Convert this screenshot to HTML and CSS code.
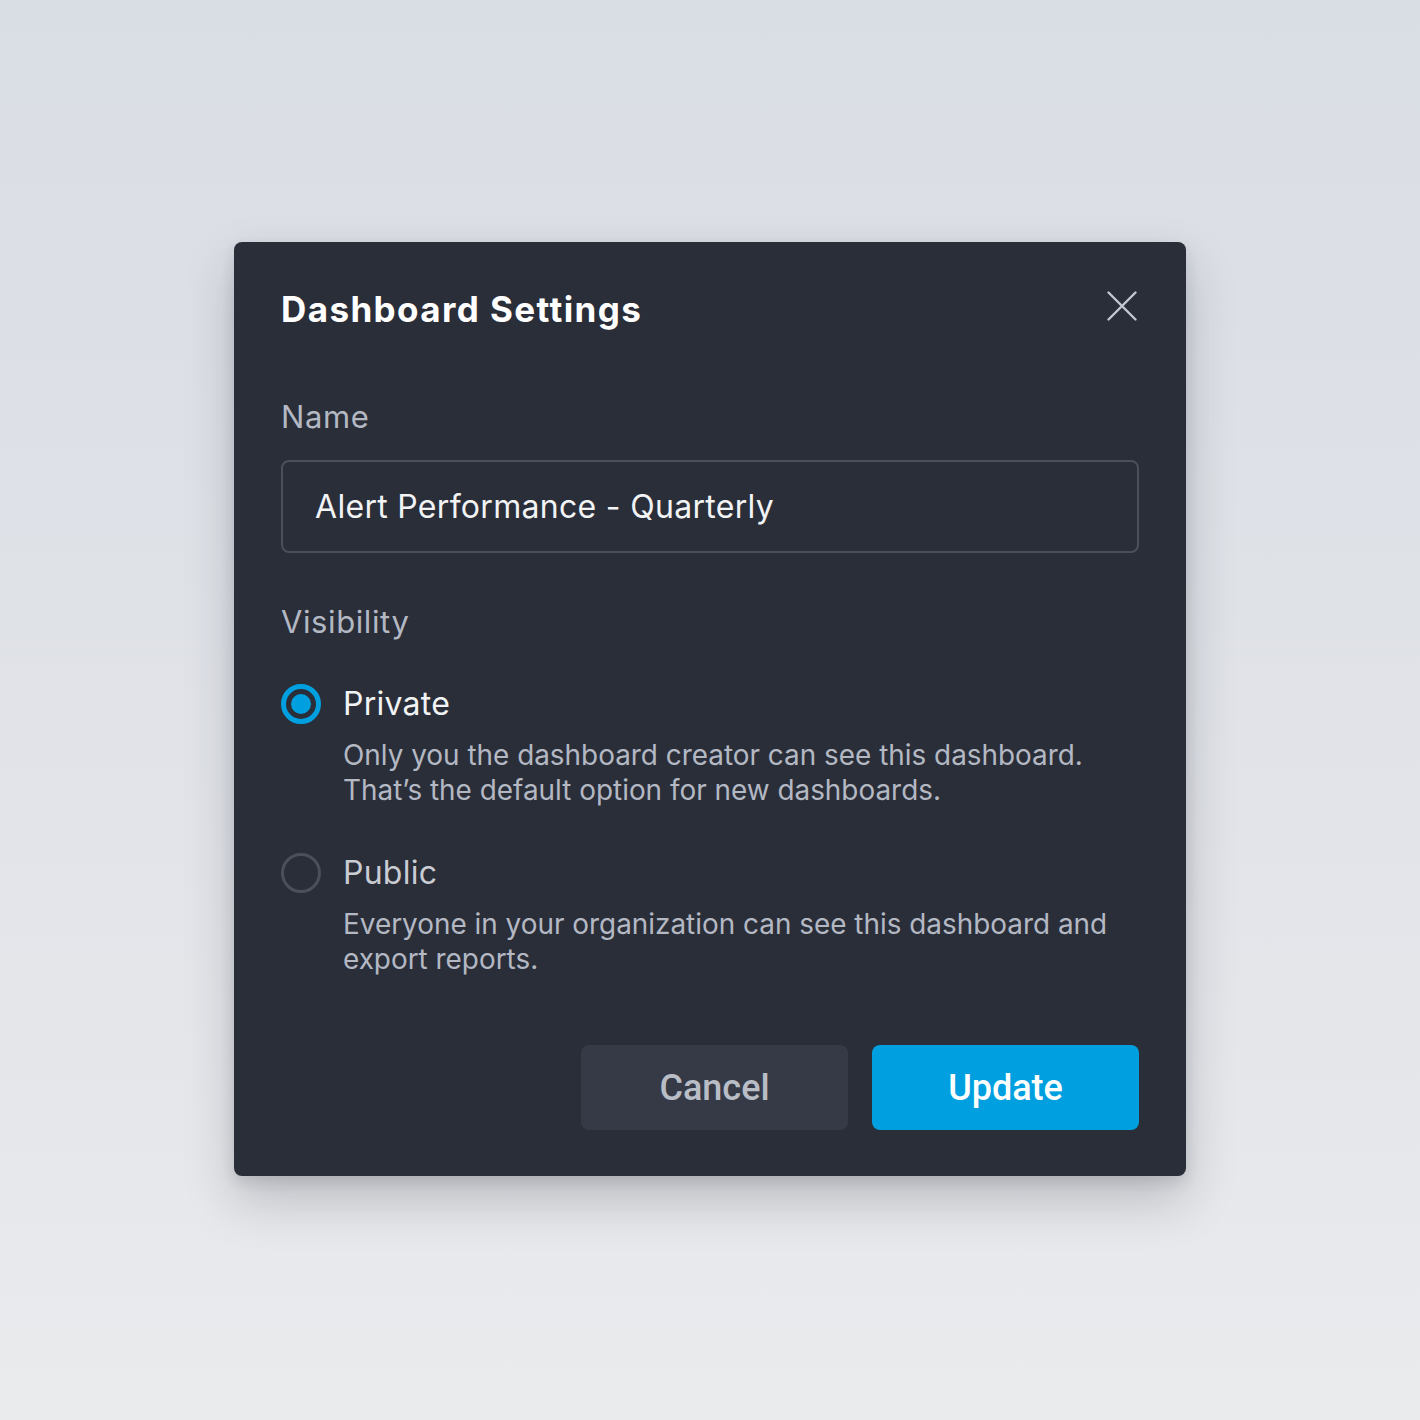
FILE: index.html
```html
<!DOCTYPE html>
<html lang="en">
<head>
<meta charset="utf-8">
<title>Dashboard Settings</title>
<link rel="stylesheet" href="styles.css">
</head>
<body>
<div class="stage">
  <div class="dialog" role="dialog" aria-labelledby="dlg-title">
    <div class="header">
      <h1 class="title" id="dlg-title">Dashboard Settings</h1>
      <button class="close" aria-label="Close">
        <svg width="34" height="34" viewBox="0 0 34 34" fill="none" stroke="#c3c7cf" stroke-width="2.4" stroke-linecap="round">
          <path d="M3.5 3.5 L30.5 30.5 M30.5 3.5 L3.5 30.5"/>
        </svg>
      </button>
    </div>
    <div class="label name-label">Name</div>
    <div class="input">Alert Performance - Quarterly</div>
    <div class="label vis-label">Visibility</div>
    <div class="option first">
      <span class="radio checked"></span>
      <div class="opt-body">
        <div class="opt-title">Private</div>
        <div class="opt-desc">Only you the dashboard creator can see this dashboard.<br>That’s the default option for new dashboards.</div>
      </div>
    </div>
    <div class="option second">
      <span class="radio"></span>
      <div class="opt-body">
        <div class="opt-title muted">Public</div>
        <div class="opt-desc">Everyone in your organization can see this dashboard and<br>export reports.</div>
      </div>
    </div>
    <div class="actions">
      <button class="btn cancel">Cancel</button>
      <button class="btn update">Update</button>
    </div>
  </div>
</div>
</body>
</html>
```
FILE: styles.css
```css
* { box-sizing: border-box; }
html, body { margin: 0; padding: 0; }
body {
  width: 1420px;
  height: 1420px;
  background: linear-gradient(180deg, #d9dde4 0%, #e2e4e9 60%, #eaebed 100%);
  font-family: Inter, "Noto Sans", sans-serif;
}
.stage {
  padding-top: 242px;
  padding-left: 234px;
}
.dialog {
  width: 952px;
  height: 934px;
  background: #2a2e39;
  border-radius: 8px;
  padding: 47px 47px 46px 47px;
  box-shadow: 0 24px 50px rgba(30, 36, 50, 0.22), 0 6px 14px rgba(30, 36, 50, 0.12);
  display: flex;
  flex-direction: column;
}
.header {
  display: flex;
  justify-content: space-between;
  align-items: center;
  height: 40px;
}
.title {
  margin: 0;
  font-size: 35px;
  line-height: 40px;
  font-weight: 700;
  letter-spacing: 1.4px;
  color: #ffffff;
}
.close {
  background: none;
  border: 0;
  padding: 0;
  width: 34px;
  height: 34px;
  margin-top: -7px;
  cursor: pointer;
  display: block;
}
.close svg { display: block; }
.label {
  font-size: 31px;
  line-height: 36px;
  letter-spacing: 0.6px;
  color: #b3b8c3;
}
.name-label { margin-top: 70px; }
.input {
  margin-top: 25px;
  height: 93px;
  border: 2px solid #4a4f5b;
  border-radius: 8px;
  padding: 0 32px;
  display: flex;
  align-items: center;
  font-size: 32px;
  letter-spacing: 0.3px;
  color: #f2f3f5;
}
.vis-label { margin-top: 51px; }
.option {
  display: flex;
  gap: 22px;
}
.option.first { margin-top: 44px; }
.option.second { margin-top: 45px; }
.radio {
  flex: none;
  width: 40px;
  height: 40px;
  border-radius: 50%;
  border: 3px solid #4b4f5b;
  display: flex;
  align-items: center;
  justify-content: center;
}
.radio.checked {
  border: 5px solid #00a0e0;
}
.radio.checked::after {
  content: "";
  width: 20px;
  height: 20px;
  border-radius: 50%;
  background: #00a0e0;
}
.opt-title {
  font-size: 32px;
  line-height: 40px;
  letter-spacing: 0.25px;
  color: #f2f3f5;
}
.opt-title.muted { color: #c9ccd3; }
.opt-desc {
  margin-top: 14px;
  font-size: 27.9px;
  line-height: 35px;
  color: #b3b8c3;
}
.actions {
  margin-top: auto;
  display: flex;
  justify-content: flex-end;
  gap: 24px;
}
.btn {
  width: 267px;
  height: 85px;
  border: 0;
  border-radius: 8px;
  font-family: Roboto, Inter, sans-serif;
  font-size: 36px;
  font-weight: 500;
  cursor: pointer;
}
.cancel { background: #353a46; color: #b9bdc6; }
.update { background: #00a0e0; color: #ffffff; padding-right: 6px; }
```
